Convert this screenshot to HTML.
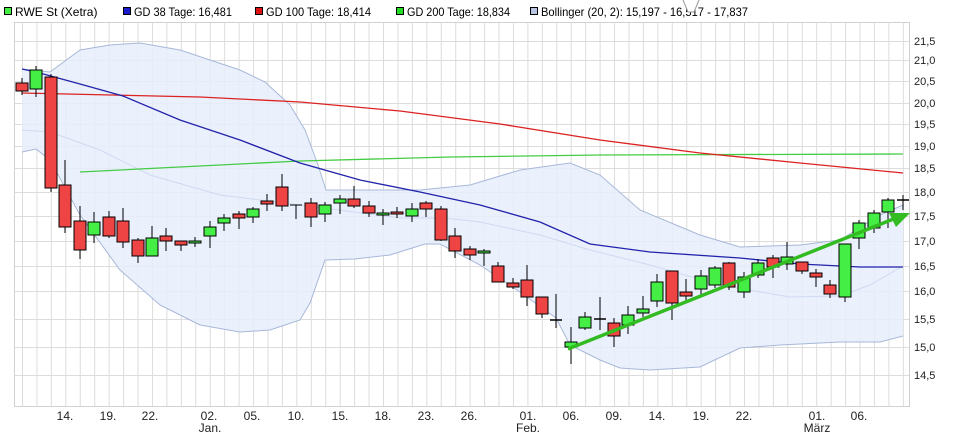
<!DOCTYPE html>
<html><head><meta charset="utf-8"><style>
body{margin:0;background:#fff;}
svg{display:block;font-family:"Liberation Sans",sans-serif;}
</style></head><body>
<svg width="955" height="442" viewBox="0 0 955 442" xmlns="http://www.w3.org/2000/svg">
<defs>
<pattern id="vg" x="22" y="0" width="14.44" height="442" patternUnits="userSpaceOnUse">
<line x1="0.5" y1="0" x2="0.5" y2="442" stroke="#dcdcdc" stroke-width="1"/>
</pattern>
</defs>
<g font-size="12" fill="#000">
<rect x="4.5" y="7.5" width="7" height="7" fill="#44ee44" stroke="#000"/><text x="15" y="16">RWE St (Xetra)</text>
<rect x="123.5" y="7.5" width="7" height="7" fill="#1a1acc" stroke="#000"/><text x="134" y="16" textLength="98" lengthAdjust="spacingAndGlyphs">GD 38 Tage: 16,481</text>
<rect x="255.5" y="7.5" width="7" height="7" fill="#dd1111" stroke="#000"/><text x="266" y="16" textLength="105" lengthAdjust="spacingAndGlyphs">GD 100 Tage: 18,414</text>
<rect x="396.5" y="7.5" width="7" height="7" fill="#22dd22" stroke="#000"/><text x="407" y="16" textLength="103" lengthAdjust="spacingAndGlyphs">GD 200 Tage: 18,834</text>
<rect x="530.5" y="7.5" width="7" height="7" fill="#b8c4e0" stroke="#000"/><text x="541" y="16" textLength="207" lengthAdjust="spacingAndGlyphs">Bollinger (20, 2): 15,197 - 16,517 - 17,837</text>
</g>
<path d="M683 0 L688 12 L694 12 L699 0" fill="#fff" stroke="#999"/>
<rect x="14" y="22" width="896" height="385" fill="url(#vg)"/>
<g stroke="#dcdcdc">
<line x1="14" x2="910" y1="41.5" y2="41.5"/><line x1="14" x2="910" y1="60.5" y2="60.5"/><line x1="14" x2="910" y1="81.5" y2="81.5"/><line x1="14" x2="910" y1="103.5" y2="103.5"/><line x1="14" x2="910" y1="124.5" y2="124.5"/><line x1="14" x2="910" y1="146.5" y2="146.5"/><line x1="14" x2="910" y1="168.5" y2="168.5"/><line x1="14" x2="910" y1="192.5" y2="192.5"/><line x1="14" x2="910" y1="216.5" y2="216.5"/><line x1="14" x2="910" y1="241.5" y2="241.5"/><line x1="14" x2="910" y1="266.5" y2="266.5"/><line x1="14" x2="910" y1="291.5" y2="291.5"/><line x1="14" x2="910" y1="319.5" y2="319.5"/><line x1="14" x2="910" y1="347.5" y2="347.5"/><line x1="14" x2="910" y1="375.5" y2="375.5"/>
</g>
<rect x="14.5" y="22.5" width="895" height="384" fill="none" stroke="#d0d0d0"/>
<path d="M22 69 L50 72 L80 50 L110 45 L140 43 L180 50 L240 70 L265 82 L290 105 L305 130 L318 165 L326 190 L355 190 L420 190 L470 185 L520 170 L570 163 L600 175 L640 210 L700 235 L740 247 L800 245 L840 240 L880 215 L903 205 L903 336 L880 342 L840 342 L780 345 L740 348 L700 367 L650 370 L620 368 L600 360 L570 345 L556 318 L520 292 L480 265 L440 244 L425 244 L390 255 L355 259 L325 260 L310 303 L300 320 L270 330 L240 332 L200 325 L160 305 L120 270 L80 215 L50 160 L36 149 L22 152 Z" fill="#e6edfc" fill-opacity="0.85" stroke="none"/>
<path d="M22 69 L50 72 L80 50 L110 45 L140 43 L180 50 L240 70 L265 82 L290 105 L305 130 L318 165 L326 190 L355 190 L420 190 L470 185 L520 170 L570 163 L600 175 L640 210 L700 235 L740 247 L800 245 L840 240 L880 215 L903 205" fill="none" stroke="#a8b8d8"/>
<path d="M903 336 L880 342 L840 342 L780 345 L740 348 L700 367 L650 370 L620 368 L600 360 L570 345 L556 318 L520 292 L480 265 L440 244 L425 244 L390 255 L355 259 L325 260 L310 303 L300 320 L270 330 L240 332 L200 325 L160 305 L120 270 L80 215 L50 160 L36 149 L22 152" fill="none" stroke="#a8b8d8"/>
<path d="M22 130 L50 132 L100 150 L150 175 L220 195 L300 205 L400 218 L445 218 L480 222 L540 235 L590 250 L650 265 L720 285 L790 297 L840 296 L870 285 L903 266" fill="none" stroke="#cfdaf0"/>
<path d="M80 172 L300 161 L450 157 L600 155 L903 154" fill="none" stroke="#44cc44" stroke-width="1.3"/>
<path d="M22 93 L200 97 L300 102 L400 111 L500 124 L600 140 L700 153 L800 163 L903 173" fill="none" stroke="#dd2222" stroke-width="1.3"/>
<path d="M22 69 L36 72 L80 84 L123 96 L180 120 L240 140 L300 163 L360 180 L420 192 L480 205 L540 222 L590 244 L650 252 L740 258 L800 264 L860 267 L903 267" fill="none" stroke="#2222aa" stroke-width="1.3"/>
<g stroke="#000" stroke-width="1">
<line x1="22" x2="22" y1="78" y2="95"/><rect x="16" y="83" width="12" height="8" fill="#ee4444"/>
<line x1="36" x2="36" y1="66" y2="97"/><rect x="30" y="70" width="12" height="19" fill="#44ee44"/>
<line x1="51" x2="51" y1="74" y2="192"/><rect x="45" y="77" width="12" height="111" fill="#ee4444"/>
<line x1="65" x2="65" y1="160" y2="233"/><rect x="59" y="185" width="12" height="42" fill="#ee4444"/>
<line x1="80" x2="80" y1="206" y2="259"/><rect x="74" y="221" width="12" height="29" fill="#ee4444"/>
<line x1="94" x2="94" y1="212" y2="243"/><rect x="88" y="222" width="12" height="13" fill="#44ee44"/>
<line x1="109" x2="109" y1="211" y2="238"/><rect x="103" y="217" width="12" height="19" fill="#ee4444"/>
<line x1="123" x2="123" y1="208" y2="248"/><rect x="117" y="221" width="12" height="21" fill="#ee4444"/>
<line x1="138" x2="138" y1="238" y2="263"/><rect x="132" y="240" width="12" height="16" fill="#ee4444"/>
<line x1="152" x2="152" y1="226" y2="256"/><rect x="146" y="238" width="12" height="18" fill="#44ee44"/>
<line x1="166" x2="166" y1="228" y2="251"/><rect x="160" y="236" width="12" height="5" fill="#ee4444"/>
<line x1="181" x2="181" y1="241" y2="251"/><rect x="175" y="241" width="12" height="4" fill="#ee4444"/>
<line x1="195" x2="195" y1="237" y2="247"/><rect x="189" y="241" width="12" height="2" fill="#44ee44"/>
<line x1="210" x2="210" y1="221" y2="248"/><rect x="204" y="227" width="12" height="9" fill="#44ee44"/>
<line x1="224" x2="224" y1="214" y2="231"/><rect x="218" y="218" width="12" height="5" fill="#44ee44"/>
<line x1="239" x2="239" y1="211" y2="229"/><rect x="233" y="214" width="12" height="4" fill="#ee4444"/>
<line x1="253" x2="253" y1="207" y2="223"/><rect x="247" y="209" width="12" height="8" fill="#44ee44"/>
<line x1="267" x2="267" y1="194" y2="211"/><rect x="261" y="201" width="12" height="3" fill="#ee4444"/>
<line x1="282" x2="282" y1="174" y2="211"/><rect x="276" y="187" width="12" height="19" fill="#ee4444"/>
<line x1="296" x2="296" y1="205" y2="219"/><line x1="290" x2="302" y1="205" y2="205"/>
<line x1="311" x2="311" y1="198" y2="227"/><rect x="305" y="203" width="12" height="14" fill="#ee4444"/>
<line x1="325" x2="325" y1="202" y2="222"/><rect x="319" y="205" width="12" height="9" fill="#44ee44"/>
<line x1="340" x2="340" y1="195" y2="214"/><rect x="334" y="199" width="12" height="4" fill="#44ee44"/>
<line x1="354" x2="354" y1="186" y2="208"/><rect x="348" y="199" width="12" height="7" fill="#ee4444"/>
<line x1="369" x2="369" y1="201" y2="217"/><rect x="363" y="206" width="12" height="7" fill="#ee4444"/>
<line x1="383" x2="383" y1="209" y2="225"/><rect x="377" y="213" width="12" height="2" fill="#44ee44"/>
<line x1="397" x2="397" y1="207" y2="218"/><rect x="391" y="212" width="12" height="2" fill="#ee4444"/>
<line x1="412" x2="412" y1="203" y2="222"/><rect x="406" y="209" width="12" height="7" fill="#44ee44"/>
<line x1="426" x2="426" y1="201" y2="217"/><rect x="420" y="203" width="12" height="6" fill="#ee4444"/>
<line x1="441" x2="441" y1="206" y2="241"/><rect x="435" y="209" width="12" height="31" fill="#ee4444"/>
<line x1="455" x2="455" y1="228" y2="258"/><rect x="449" y="236" width="12" height="15" fill="#ee4444"/>
<line x1="470" x2="470" y1="246" y2="260"/><rect x="464" y="249" width="12" height="6" fill="#ee4444"/>
<line x1="484" x2="484" y1="249" y2="266"/><rect x="478" y="251" width="12" height="2" fill="#44ee44"/>
<line x1="498" x2="498" y1="262" y2="282"/><rect x="492" y="266" width="12" height="16" fill="#ee4444"/>
<line x1="513" x2="513" y1="278" y2="289"/><rect x="507" y="283" width="12" height="4" fill="#ee4444"/>
<line x1="527" x2="527" y1="265" y2="306"/><rect x="521" y="280" width="12" height="17" fill="#ee4444"/>
<line x1="542" x2="542" y1="297" y2="318"/><rect x="536" y="297" width="12" height="17" fill="#ee4444"/>
<line x1="556" x2="556" y1="294" y2="328"/><line x1="550" x2="562" y1="320" y2="320" stroke-width="1.5"/>
<line x1="571" x2="571" y1="327" y2="364"/><rect x="565" y="342" width="12" height="5" fill="#44ee44"/>
<line x1="585" x2="585" y1="312" y2="330"/><rect x="579" y="317" width="12" height="11" fill="#44ee44"/>
<line x1="600" x2="600" y1="297" y2="330"/><line x1="594" x2="606" y1="319" y2="319" stroke-width="1.5"/>
<line x1="614" x2="614" y1="318" y2="347"/><rect x="608" y="323" width="12" height="13" fill="#ee4444"/>
<line x1="628" x2="628" y1="306" y2="334"/><rect x="622" y="315" width="12" height="10" fill="#44ee44"/>
<line x1="643" x2="643" y1="296" y2="317"/><rect x="637" y="309" width="12" height="4" fill="#44ee44"/>
<line x1="657" x2="657" y1="274" y2="307"/><rect x="651" y="282" width="12" height="19" fill="#44ee44"/>
<line x1="672" x2="672" y1="271" y2="320"/><rect x="666" y="271" width="12" height="32" fill="#ee4444"/>
<line x1="686" x2="686" y1="279" y2="301"/><rect x="680" y="292" width="12" height="4" fill="#ee4444"/>
<line x1="701" x2="701" y1="270" y2="295"/><rect x="695" y="276" width="12" height="13" fill="#44ee44"/>
<line x1="715" x2="715" y1="266" y2="288"/><rect x="709" y="268" width="12" height="17" fill="#44ee44"/>
<line x1="729" x2="729" y1="262" y2="290"/><rect x="723" y="263" width="12" height="24" fill="#ee4444"/>
<line x1="744" x2="744" y1="272" y2="298"/><rect x="738" y="277" width="12" height="15" fill="#44ee44"/>
<line x1="758" x2="758" y1="259" y2="278"/><rect x="752" y="263" width="12" height="12" fill="#44ee44"/>
<line x1="773" x2="773" y1="255" y2="278"/><rect x="767" y="258" width="12" height="9" fill="#ee4444"/>
<line x1="787" x2="787" y1="242" y2="270"/><rect x="781" y="257" width="12" height="7" fill="#44ee44"/>
<line x1="802" x2="802" y1="262" y2="274"/><rect x="796" y="262" width="12" height="9" fill="#ee4444"/>
<line x1="816" x2="816" y1="269" y2="287"/><rect x="810" y="273" width="12" height="4" fill="#ee4444"/>
<line x1="830" x2="830" y1="280" y2="298"/><rect x="824" y="285" width="12" height="9" fill="#ee4444"/>
<line x1="845" x2="845" y1="244" y2="302"/><rect x="839" y="244" width="12" height="53" fill="#44ee44"/>
<line x1="859" x2="859" y1="220" y2="249"/><rect x="853" y="223" width="12" height="15" fill="#44ee44"/>
<line x1="874" x2="874" y1="210" y2="233"/><rect x="868" y="213" width="12" height="15" fill="#44ee44"/>
<line x1="888" x2="888" y1="198" y2="228"/><rect x="882" y="200" width="12" height="12" fill="#44ee44"/>
<line x1="903" x2="903" y1="195" y2="210"/><line x1="897" x2="909" y1="200" y2="200" stroke-width="1.5"/>
</g>
<line x1="568" y1="349" x2="896" y2="218" stroke="#33bb22" stroke-width="3.5"/>
<path d="M910 213 L889 213 L896 227 Z" fill="#33bb22"/>
<g font-size="11" fill="#222">
<text x="914" y="45">21,5</text><text x="914" y="64">21,0</text><text x="914" y="85">20,5</text><text x="914" y="107">20,0</text><text x="914" y="128">19,5</text><text x="914" y="150">19,0</text><text x="914" y="172">18,5</text><text x="914" y="196">18,0</text><text x="914" y="220">17,5</text><text x="914" y="245">17,0</text><text x="914" y="270">16,5</text><text x="914" y="295">16,0</text><text x="914" y="323">15,5</text><text x="914" y="351">15,0</text><text x="914" y="379">14,5</text>
</g>
<g font-size="12" fill="#222" text-anchor="middle">
<text x="65" y="420">14.</text><text x="108" y="420">19.</text><text x="150" y="420">22.</text><text x="209" y="420">02.</text><text x="252" y="420">05.</text><text x="296" y="420">10.</text><text x="340" y="420">15.</text><text x="383" y="420">18.</text><text x="426" y="420">23.</text><text x="469" y="420">26.</text><text x="528" y="420">01.</text><text x="571" y="420">06.</text><text x="614" y="420">09.</text><text x="657" y="420">14.</text><text x="701" y="420">19.</text><text x="744" y="420">22.</text><text x="817" y="420">01.</text><text x="859" y="420">06.</text>
<text x="210" y="432">Jan.</text><text x="528" y="432">Feb.</text><text x="817" y="432">März</text>
</g>
</svg>
</body></html>
